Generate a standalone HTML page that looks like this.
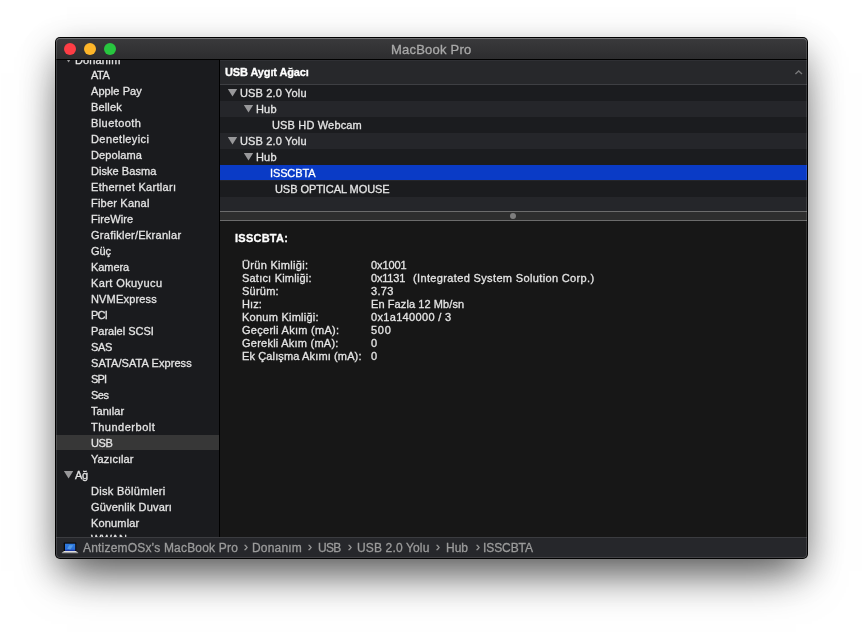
<!DOCTYPE html><html lang="tr"><head><meta charset="utf-8"><title>MacBook Pro</title><style>
html,body{margin:0;padding:0;}
body{width:863px;height:632px;background:#fff;position:relative;overflow:hidden;font-family:"Liberation Sans",sans-serif;}
.win{position:absolute;left:55px;top:37px;width:753px;height:522px;border-radius:5px;background:#000;
 box-shadow:0 12px 34px rgba(0,0,0,.30),0 24px 44px -12px rgba(0,0,0,.55);}
.in{position:absolute;left:1px;top:1px;right:1px;bottom:1px;border-radius:4px;overflow:hidden;background:#1b1c1f;}
.in:after{content:"";position:absolute;left:0;top:0;right:0;bottom:0;border-radius:4px;box-shadow:inset 0 0 0 1px rgba(255,255,255,.13),inset 0 1px 0 rgba(255,255,255,.18);pointer-events:none;}
.abs{position:absolute;}
.t{position:absolute;white-space:nowrap;line-height:16px;height:16px;will-change:transform;-webkit-text-stroke:0.3px currentColor;}
.tb{left:0;top:0;right:0;height:21px;background:linear-gradient(#3a3a3c,#2d2d2f);border-bottom:1px solid #000;}
.dot{position:absolute;top:4.9px;width:12.4px;height:12.4px;border-radius:50%;}
.side{left:0;top:22px;width:163px;height:477px;background:#1a1b1e;overflow:hidden;}
.vdiv{left:163px;top:22px;width:1px;height:477px;background:#000;}
.right{left:164px;top:22px;right:0;height:477px;background:#171717;overflow:hidden;}
.row{position:absolute;left:0;right:0;height:16px;}
.status{left:0;right:0;top:499px;bottom:0;background:#26272b;border-top:1px solid #3b3c40;}
.tri{position:absolute;width:9.4px;height:7.6px;background:#98989a;clip-path:polygon(0 0,100% 0,50% 100%);}
</style></head><body>
<div class="win"><div class="in">
<div class="abs tb">
<i class="dot" style="left:7.8px;background:#fc3d45"></i>
<i class="dot" style="left:27.8px;background:#fcb529"></i>
<i class="dot" style="left:47.8px;background:#28c63f"></i>
<span class="t" style="left:334.90px;top:3.70px;font-size:13px;color:#a9a9a9;letter-spacing:0.220px;">MacBook Pro</span>
</div>
<div class="abs side">
<div class="row" style="top:375px;height:15px;background:#373737"></div>
<i class="tri" style="left:7.9px;top:411px"></i>
<i class="tri" style="left:7.9px;top:-5px"></i>
<span class="t" style="left:35.30px;top:7.00px;font-size:11px;color:#e4e4e4;letter-spacing:-0.512px;">ATA</span>
<span class="t" style="left:35.30px;top:23.00px;font-size:11px;color:#e4e4e4;letter-spacing:0.082px;">Apple Pay</span>
<span class="t" style="left:35.30px;top:39.00px;font-size:11px;color:#e4e4e4;letter-spacing:0.148px;">Bellek</span>
<span class="t" style="left:35.30px;top:55.00px;font-size:11px;color:#e4e4e4;letter-spacing:0.417px;">Bluetooth</span>
<span class="t" style="left:35.30px;top:71.00px;font-size:11px;color:#e4e4e4;letter-spacing:0.414px;">Denetleyici</span>
<span class="t" style="left:35.30px;top:87.00px;font-size:11px;color:#e4e4e4;letter-spacing:0.097px;">Depolama</span>
<span class="t" style="left:35.30px;top:103.00px;font-size:11px;color:#e4e4e4;letter-spacing:0.052px;">Diske Basma</span>
<span class="t" style="left:35.30px;top:119.00px;font-size:11px;color:#e4e4e4;letter-spacing:0.304px;">Ethernet Kartları</span>
<span class="t" style="left:35.30px;top:135.00px;font-size:11px;color:#e4e4e4;letter-spacing:0.209px;">Fiber Kanal</span>
<span class="t" style="left:35.30px;top:151.00px;font-size:11px;color:#e4e4e4;letter-spacing:0.095px;">FireWire</span>
<span class="t" style="left:35.30px;top:167.00px;font-size:11px;color:#e4e4e4;letter-spacing:0.264px;">Grafikler/Ekranlar</span>
<span class="t" style="left:35.30px;top:183.00px;font-size:11px;color:#e4e4e4;letter-spacing:-0.087px;">Güç</span>
<span class="t" style="left:35.30px;top:199.00px;font-size:11px;color:#e4e4e4;letter-spacing:-0.080px;">Kamera</span>
<span class="t" style="left:35.30px;top:215.00px;font-size:11px;color:#e4e4e4;letter-spacing:0.398px;">Kart Okuyucu</span>
<span class="t" style="left:35.30px;top:231.00px;font-size:11px;color:#e4e4e4;letter-spacing:0.169px;">NVMExpress</span>
<span class="t" style="left:35.30px;top:247.00px;font-size:11px;color:#e4e4e4;letter-spacing:-0.790px;">PCI</span>
<span class="t" style="left:35.30px;top:263.00px;font-size:11px;color:#e4e4e4;letter-spacing:-0.020px;">Paralel SCSI</span>
<span class="t" style="left:35.30px;top:279.00px;font-size:11px;color:#e4e4e4;letter-spacing:-0.387px;">SAS</span>
<span class="t" style="left:35.30px;top:295.00px;font-size:11px;color:#e4e4e4;letter-spacing:0.079px;">SATA/SATA Express</span>
<span class="t" style="left:35.30px;top:311.00px;font-size:11px;color:#e4e4e4;letter-spacing:-0.887px;">SPI</span>
<span class="t" style="left:35.30px;top:327.00px;font-size:11px;color:#e4e4e4;letter-spacing:-0.527px;">Ses</span>
<span class="t" style="left:35.30px;top:343.00px;font-size:11px;color:#e4e4e4;letter-spacing:0.008px;">Tanılar</span>
<span class="t" style="left:35.30px;top:359.00px;font-size:11px;color:#e4e4e4;letter-spacing:0.505px;">Thunderbolt</span>
<span class="t" style="left:35.30px;top:375.00px;font-size:11px;color:#e4e4e4;letter-spacing:-0.390px;">USB</span>
<span class="t" style="left:35.30px;top:391.00px;font-size:11px;color:#e4e4e4;letter-spacing:0.048px;">Yazıcılar</span>
<span class="t" style="left:19.30px;top:-8.50px;font-size:11px;color:#e4e4e4;letter-spacing:0.122px;">Donanım</span>
<span class="t" style="left:19.30px;top:407.00px;font-size:11px;color:#e4e4e4;letter-spacing:-0.237px;">Ağ</span>
<span class="t" style="left:35.30px;top:423.00px;font-size:11px;color:#e4e4e4;letter-spacing:0.304px;">Disk Bölümleri</span>
<span class="t" style="left:35.30px;top:439.00px;font-size:11px;color:#e4e4e4;letter-spacing:0.186px;">Güvenlik Duvarı</span>
<span class="t" style="left:35.30px;top:455.00px;font-size:11px;color:#e4e4e4;letter-spacing:0.155px;">Konumlar</span>
<span class="t" style="left:35.30px;top:471.00px;font-size:11px;color:#e4e4e4;letter-spacing:0.102px;">WWAN</span>
</div><div class="abs vdiv"></div>
<div class="abs right">
<div class="abs" style="left:0;right:0;top:0;height:24px;background:#27282b;border-top:1px solid #2f3034;border-bottom:1px solid #3e3f43;box-sizing:content-box;height:23px"></div>
<div class="row" style="top:25px;height:16px;background:#1b1c1f"></div>
<div class="row" style="top:41px;height:16px;background:#25262a"></div>
<div class="row" style="top:57px;height:16px;background:#1b1c1f"></div>
<div class="row" style="top:73px;height:16px;background:#25262a"></div>
<div class="row" style="top:89px;height:16px;background:#1b1c1f"></div>
<div class="row" style="top:105px;height:16px;background:#25262a"></div>
<div class="row" style="top:121px;height:16px;background:#1b1c1f"></div>
<div class="row" style="top:137px;height:14px;background:#25262a"></div>
<div class="row" style="top:105px;height:15px;background:#0a3bc6"></div>
<i class="tri" style="left:7.800000000000011px;top:29px"></i>
<i class="tri" style="left:23.80000000000001px;top:45px"></i>
<i class="tri" style="left:7.800000000000011px;top:77px"></i>
<i class="tri" style="left:23.80000000000001px;top:93px"></i>
<svg class="abs" style="left:574px;top:8px" width="10" height="8" viewBox="0 0 10 8"><path d="M1.4 6 L4.7 2.9 L8 6" fill="none" stroke="#767678" stroke-width="1.4"/></svg>
<div class="abs" style="left:0;right:0;top:151px;height:8px;background:#2e2e2e;border-top:1px solid #6c6c6c;border-bottom:1px solid #6c6c6c"></div>
<i class="abs" style="left:290px;top:153px;width:6px;height:6px;border-radius:50%;background:#7e7e7e"></i>
<span class="t" style="left:4.60px;top:4.20px;font-size:11px;color:#ffffff;font-weight:700;letter-spacing:-0.123px;">USB Aygıt Ağacı</span>
<span class="t" style="left:19.50px;top:25.00px;font-size:11px;color:#e4e4e4;letter-spacing:0.154px;">USB 2.0 Yolu</span>
<span class="t" style="left:35.60px;top:41.00px;font-size:11px;color:#e4e4e4;letter-spacing:0.169px;">Hub</span>
<span class="t" style="left:51.60px;top:57.00px;font-size:11px;color:#e4e4e4;letter-spacing:0.162px;">USB HD Webcam</span>
<span class="t" style="left:19.50px;top:73.00px;font-size:11px;color:#e4e4e4;letter-spacing:0.154px;">USB 2.0 Yolu</span>
<span class="t" style="left:35.60px;top:89.00px;font-size:11px;color:#e4e4e4;letter-spacing:0.169px;">Hub</span>
<span class="t" style="left:50.10px;top:105.00px;font-size:11px;color:#ffffff;letter-spacing:-0.119px;">ISSCBTA</span>
<span class="t" style="left:54.90px;top:121.00px;font-size:11px;color:#e4e4e4;letter-spacing:-0.069px;">USB OPTICAL MOUSE</span>
<span class="t" style="left:15.40px;top:169.50px;font-size:11px;color:#ffffff;font-weight:700;letter-spacing:0.248px;">ISSCBTA:</span>
<span class="t" style="left:21.70px;top:196.50px;font-size:11px;color:#e4e4e4;letter-spacing:0.309px;">Ürün Kimliği:</span>
<span class="t" style="left:150.70px;top:196.50px;font-size:11px;color:#e4e4e4;letter-spacing:-0.074px;">0x1001</span>
<span class="t" style="left:21.70px;top:209.50px;font-size:11px;color:#e4e4e4;letter-spacing:0.209px;">Satıcı Kimliği:</span>
<span class="t" style="left:150.70px;top:209.50px;font-size:11px;color:#e4e4e4;letter-spacing:-0.191px;">0x1131</span>
<span class="t" style="left:193.00px;top:209.50px;font-size:11px;color:#e4e4e4;letter-spacing:0.358px;">(Integrated System Solution Corp.)</span>
<span class="t" style="left:21.70px;top:222.50px;font-size:11px;color:#e4e4e4;letter-spacing:0.240px;">Sürüm:</span>
<span class="t" style="left:150.70px;top:222.50px;font-size:11px;color:#e4e4e4;letter-spacing:0.336px;">3.73</span>
<span class="t" style="left:21.70px;top:235.50px;font-size:11px;color:#e4e4e4;letter-spacing:0.067px;">Hız:</span>
<span class="t" style="left:150.70px;top:235.50px;font-size:11px;color:#e4e4e4;letter-spacing:0.088px;">En Fazla 12 Mb/sn</span>
<span class="t" style="left:21.70px;top:248.50px;font-size:11px;color:#e4e4e4;letter-spacing:0.246px;">Konum Kimliği:</span>
<span class="t" style="left:150.70px;top:248.50px;font-size:11px;color:#e4e4e4;letter-spacing:0.329px;">0x1a140000 / 3</span>
<span class="t" style="left:21.70px;top:261.50px;font-size:11px;color:#e4e4e4;letter-spacing:0.280px;">Geçerli Akım (mA):</span>
<span class="t" style="left:150.70px;top:261.50px;font-size:11px;color:#e4e4e4;letter-spacing:0.732px;">500</span>
<span class="t" style="left:21.70px;top:274.50px;font-size:11px;color:#e4e4e4;letter-spacing:0.239px;">Gerekli Akım (mA):</span>
<span class="t" style="left:150.70px;top:274.50px;font-size:11px;color:#e4e4e4;">0</span>
<span class="t" style="left:21.70px;top:287.50px;font-size:11px;color:#e4e4e4;letter-spacing:0.129px;">Ek Çalışma Akımı (mA):</span>
<span class="t" style="left:150.70px;top:287.50px;font-size:11px;color:#e4e4e4;">0</span>
</div>
<div class="abs status">
<svg class="abs" style="left:5px;top:4px" width="18" height="12" viewBox="0 0 18 12">
<defs><linearGradient id="g" x1="0" y1="0" x2="0" y2="1"><stop offset="0" stop-color="#2f7be0"/><stop offset=".75" stop-color="#2a6fd8"/><stop offset="1" stop-color="#1a2fa8"/></linearGradient></defs>
<rect x="2.7" y="0.6" width="12.6" height="8.6" rx="0.7" fill="#0a0a0b"/>
<rect x="4" y="1.7" width="10.2" height="7.2" fill="url(#g)"/>
<path d="M6.2 6.8 L8.2 3.2 H12.2 L9.4 7.6 Z" fill="#6fb4ea" opacity=".6"/>
<path d="M3.2 9 H14.8 L17.2 10.7 H0.8 Z" fill="#dedede"/>
<rect x="0.8" y="10.6" width="16.4" height="0.7" fill="#8d8d8f"/></svg>
<span class="t" style="left:26.80px;top:1.50px;font-size:12px;color:#9b9b9b;letter-spacing:0.190px;">AntizemOSx’s MacBook Pro</span>
<span class="t" style="left:187.50px;top:1.00px;font-size:12px;color:#9b9b9b;">›</span>
<span class="t" style="left:196.00px;top:1.50px;font-size:12px;color:#9b9b9b;letter-spacing:0.184px;">Donanım</span>
<span class="t" style="left:252.30px;top:1.00px;font-size:12px;color:#9b9b9b;">›</span>
<span class="t" style="left:261.70px;top:1.50px;font-size:12px;color:#9b9b9b;letter-spacing:-0.685px;">USB</span>
<span class="t" style="left:292.30px;top:1.00px;font-size:12px;color:#9b9b9b;">›</span>
<span class="t" style="left:301.40px;top:1.50px;font-size:12px;color:#9b9b9b;letter-spacing:0.149px;">USB 2.0 Yolu</span>
<span class="t" style="left:380.20px;top:1.00px;font-size:12px;color:#9b9b9b;">›</span>
<span class="t" style="left:389.60px;top:1.50px;font-size:12px;color:#9b9b9b;letter-spacing:-0.020px;">Hub</span>
<span class="t" style="left:420.00px;top:1.00px;font-size:12px;color:#9b9b9b;">›</span>
<span class="t" style="left:426.90px;top:1.50px;font-size:12px;color:#9b9b9b;letter-spacing:-0.092px;">ISSCBTA</span>
</div>
</div></div></body></html>
